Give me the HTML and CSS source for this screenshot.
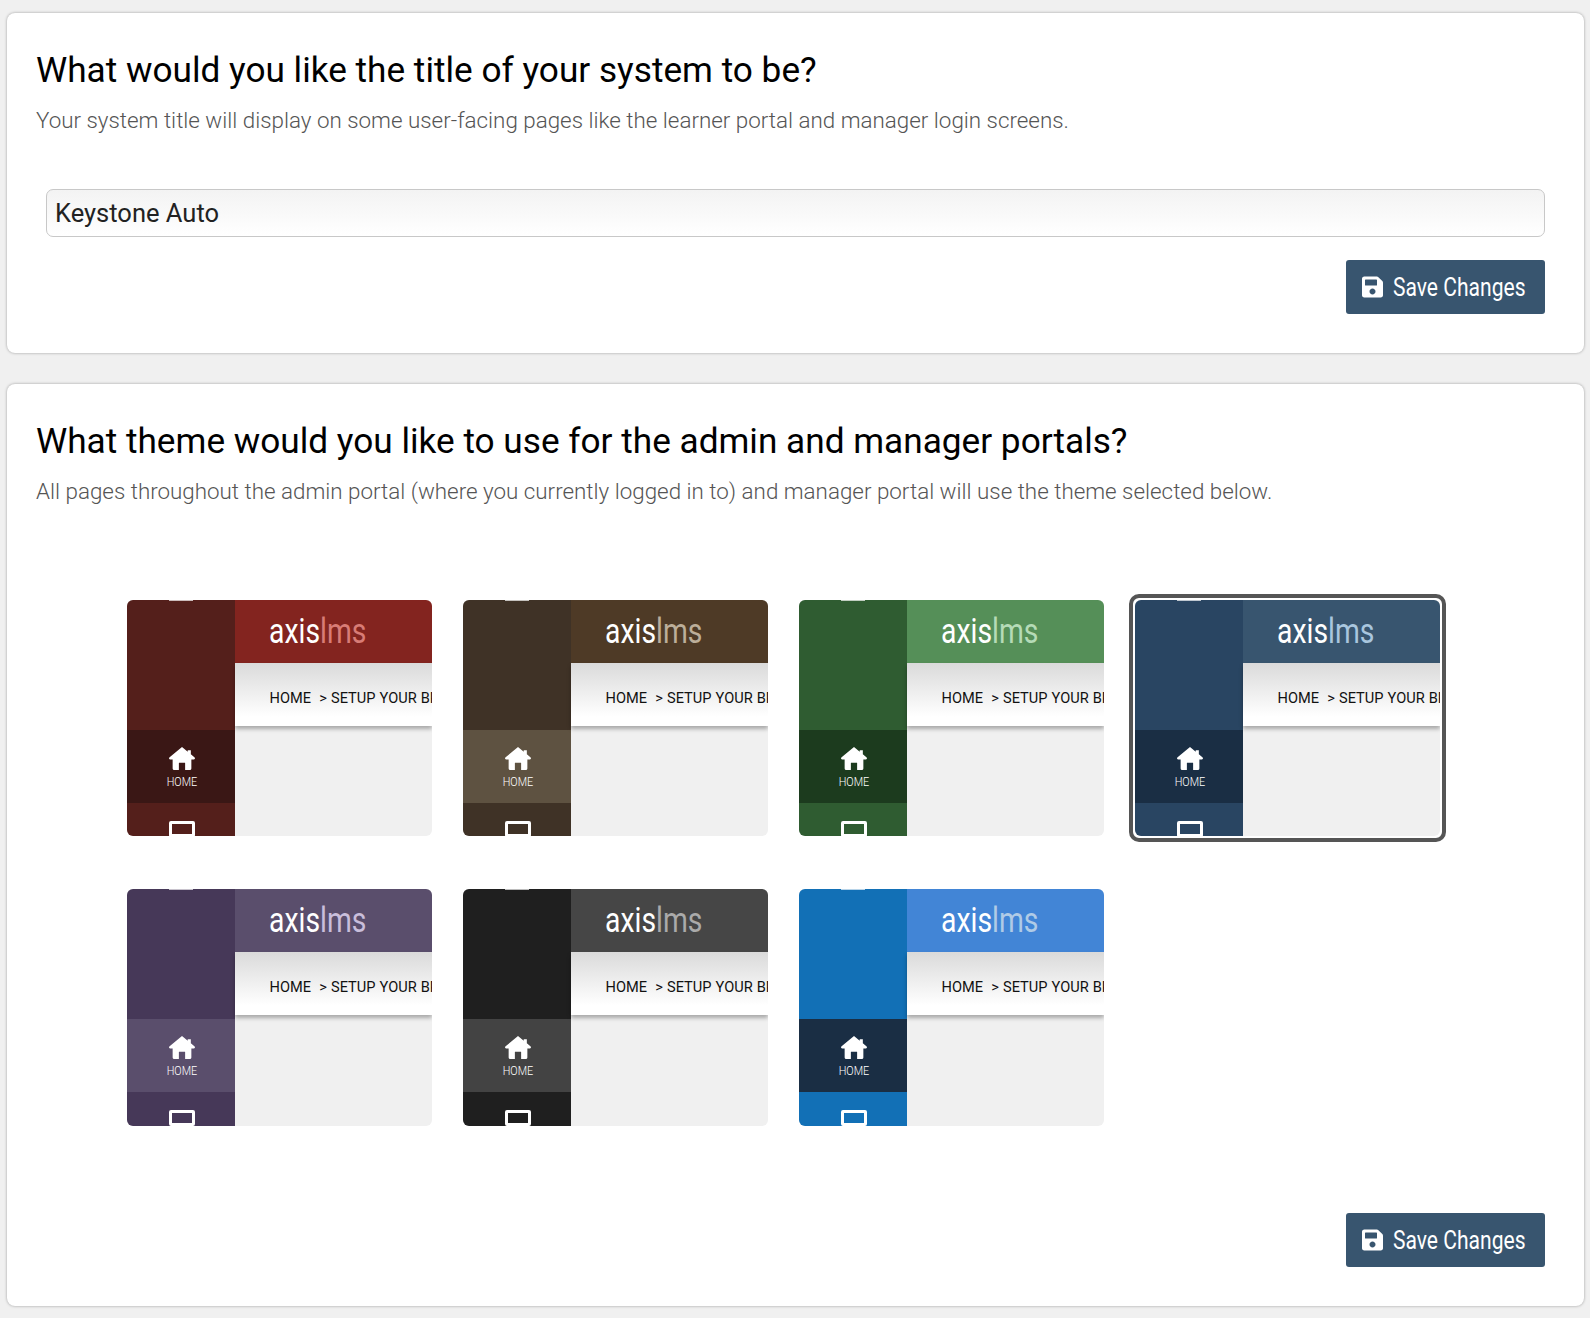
FILE: index.html
```html
<!DOCTYPE html>
<html lang="en">
<head>
<meta charset="utf-8">
<title>System settings</title>
<link rel="stylesheet" href="styles.css">
</head>
<body>
<svg class="defs" width="0" height="0" aria-hidden="true">
  <symbol id="save" viewBox="0 0 448 512"><path d="M433.941 129.941l-83.882-83.882A48 48 0 0 0 316.118 32H48C21.49 32 0 53.49 0 80v352c0 26.51 21.49 48 48 48h352c26.51 0 48-21.49 48-48V163.882a48 48 0 0 0-14.059-33.941zM224 416c-35.346 0-64-28.654-64-64 0-35.346 28.654-64 64-64s64 28.654 64 64c0 35.346-28.654 64-64 64zm96-304.52V212c0 6.627-5.373 12-12 12H76c-6.627 0-12-5.373-12-12V108c0-6.627 5.373-12 12-12h228.52c3.183 0 6.235 1.264 8.485 3.515l3.48 3.48A11.996 11.996 0 0 1 320 111.48z"/></symbol>
  <symbol id="home" viewBox="0 0 25 22"><path d="M12.5 0L.6 9.8a1.2 1.2 0 0 0 .8 2.2H3.5v8.5A1.5 1.5 0 0 0 5 22h4.5v-7h6v7H20a1.5 1.5 0 0 0 1.5-1.5V12h2.1a1.2 1.2 0 0 0 .8-2.2L21 7V3h-3v1.5z"/></symbol>
</svg>
<main class="page">
  <section class="card card-title">
    <h2>What would you like the title of your system to be?</h2>
    <p class="sub">Your system title will display on some user-facing pages like the learner portal and manager login screens.</p>
    <input class="title-input" type="text" value="Keystone Auto">
    <div class="actions"><button class="save" type="button"><svg class="save-icon"><use href="#save"/></svg><span class="save-label">Save Changes</span></button></div>
  </section>
  <section class="card card-theme">
    <h2>What theme would you like to use for the admin and manager portals?</h2>
    <p class="sub">All pages throughout the admin portal (where you currently logged in to) and manager portal will use the theme selected below.</p>
    <div class="themes">
      <div class="slot"><div class="thumb red"><div class="side"><div class="nav-home"><svg class="home-icon"><use href="#home"/></svg><span>HOME</span></div><div class="monitor"></div></div><div class="main"><div class="bar"><span class="logo">axis<span class="lms">lms</span></span></div><div class="crumb">HOME&nbsp; &gt; SETUP YOUR BRANDING</div></div></div></div>
      <div class="slot"><div class="thumb brown"><div class="side"><div class="nav-home"><svg class="home-icon"><use href="#home"/></svg><span>HOME</span></div><div class="monitor"></div></div><div class="main"><div class="bar"><span class="logo">axis<span class="lms">lms</span></span></div><div class="crumb">HOME&nbsp; &gt; SETUP YOUR BRANDING</div></div></div></div>
      <div class="slot"><div class="thumb green"><div class="side"><div class="nav-home"><svg class="home-icon"><use href="#home"/></svg><span>HOME</span></div><div class="monitor"></div></div><div class="main"><div class="bar"><span class="logo">axis<span class="lms">lms</span></span></div><div class="crumb">HOME&nbsp; &gt; SETUP YOUR BRANDING</div></div></div></div>
      <div class="slot selected"><div class="thumb navy"><div class="side"><div class="nav-home"><svg class="home-icon"><use href="#home"/></svg><span>HOME</span></div><div class="monitor"></div></div><div class="main"><div class="bar"><span class="logo">axis<span class="lms">lms</span></span></div><div class="crumb">HOME&nbsp; &gt; SETUP YOUR BRANDING</div></div></div></div>
      <div class="slot"><div class="thumb purple"><div class="side"><div class="nav-home"><svg class="home-icon"><use href="#home"/></svg><span>HOME</span></div><div class="monitor"></div></div><div class="main"><div class="bar"><span class="logo">axis<span class="lms">lms</span></span></div><div class="crumb">HOME&nbsp; &gt; SETUP YOUR BRANDING</div></div></div></div>
      <div class="slot"><div class="thumb black"><div class="side"><div class="nav-home"><svg class="home-icon"><use href="#home"/></svg><span>HOME</span></div><div class="monitor"></div></div><div class="main"><div class="bar"><span class="logo">axis<span class="lms">lms</span></span></div><div class="crumb">HOME&nbsp; &gt; SETUP YOUR BRANDING</div></div></div></div>
      <div class="slot"><div class="thumb blue"><div class="side"><div class="nav-home"><svg class="home-icon"><use href="#home"/></svg><span>HOME</span></div><div class="monitor"></div></div><div class="main"><div class="bar"><span class="logo">axis<span class="lms">lms</span></span></div><div class="crumb">HOME&nbsp; &gt; SETUP YOUR BRANDING</div></div></div></div>
    </div>
    <div class="actions"><button class="save" type="button"><svg class="save-icon"><use href="#save"/></svg><span class="save-label">Save Changes</span></button></div>
  </section>
</main>
</body>
</html>
```
FILE: styles.css
```css
* { box-sizing: border-box; }
html, body { margin: 0; padding: 0; }
body { background: #f0f0f0; font-family: Roboto, "Liberation Sans", sans-serif; color: #000; }
.defs { display: block; height: 0; }
.page { display: flex; flex-direction: column; gap: 31px; padding: 13px 6px 12px 7px; }
.card { background: #fff; border-radius: 8px; box-shadow: 0 0 3px rgba(0, 0, 0, 0.35); padding: 34px 39px 0 29px; }
.card-title { height: 340px; }
.card-theme { height: 922px; }
h2 { margin: 0; font-size: 35.2px; line-height: 46px; font-weight: 400; }
.sub { margin: 12px 0 0; font-size: 22.39px; line-height: 30px; font-weight: 300; color: #555; }
.title-input { display: block; width: 1499px; height: 48px; margin: 54px 0 0 10px; padding: 0 8px; border: 1px solid #c8c8c8; border-radius: 7px; background: linear-gradient(#f3f3f3, #fff); font: 400 25.5px Roboto, sans-serif; color: #222; }
.actions { display: flex; justify-content: flex-end; }
.card-title .actions { margin-top: 23px; }
.save { display: flex; align-items: center; gap: 10px; width: 199px; height: 54px; padding: 0 0 0 16px; border: 0; border-radius: 3px; background: #38556f; color: #fff; font-family: Roboto, sans-serif; font-size: 26px; overflow: hidden; }
.save-icon { flex: none; width: 21px; height: 24px; fill: #fff; }
.save-label { display: inline-block; transform: scaleX(0.81); transform-origin: left center; white-space: nowrap; }
.themes { display: grid; grid-template-columns: repeat(4, 305px); grid-template-rows: 236px 237px; column-gap: 31px; row-gap: 53px; margin: 94px 0 0 91px; }
.slot { position: relative; }
.selected::after { content: ""; position: absolute; inset: -6px; border: 4px solid #555; border-radius: 10px; }
.thumb { position: relative; display: grid; grid-template-columns: 107.5px 1fr; height: 100%; overflow: hidden; border-radius: 6px; background: #f0f0f0; }
.thumb::before { content: ""; position: absolute; left: 42px; top: 0; width: 24px; height: 1px; background: rgba(255, 255, 255, 0.7); }
.side { display: flex; flex-direction: column; align-items: center; background: var(--side); padding-top: 130px; }
.nav-home { display: flex; flex-direction: column; align-items: center; width: 100%; height: 73px; padding: 17px 0 0 2px; background: var(--active); color: #fff; font-size: 12px; line-height: 14px; }
.nav-home span { display: block; margin-top: 5px; transform: scaleX(0.9); font-weight: 300; }
.home-icon { flex: none; width: 26px; height: 23px; fill: #fff; }
.monitor { flex: none; width: 26px; height: 16px; margin: 18px 0 0 2px; border: 3px solid #fff; border-radius: 2px; }
.main { display: flex; flex-direction: column; min-width: 0; }
.bar { height: 63px; padding-left: 34px; background: var(--head); color: #fff; font-size: 35px; line-height: 63px; }
.logo { display: inline-block; transform: scaleX(0.81); transform-origin: left center; white-space: nowrap; }
.lms { color: var(--lms); font-weight: 400; }
.crumb { height: 63px; padding-left: 35px; background: linear-gradient(#dadada, #fff 85%); box-shadow: 0 3px 4px rgba(0, 0, 0, 0.3); font-size: 14.6px; line-height: 70px; word-spacing: 0.5px; white-space: nowrap; overflow: hidden; color: #111; }
.red { --side: #541f1b; --active: #3a1715; --head: #83241f; --lms: #d87c76; }
.brown { --side: #3f3226; --active: #5e5241; --head: #4e3a26; --lms: #bcae9a; }
.green { --side: #2f5c31; --active: #1c3b1e; --head: #558f58; --lms: #b5dbb7; }
.navy { --side: #294562; --active: #1a2e44; --head: #38556f; --lms: #a9c6de; }
.purple { --side: #463858; --active: #5a4e6c; --head: #5a4e6c; --lms: #c9bedb; }
.black { --side: #1f1f1f; --active: #434343; --head: #464646; --lms: #aaaaaa; }
.blue { --side: #1270b6; --active: #1a2e44; --head: #4285d6; --lms: #b0cbe6; }
.card-theme .actions { margin-top: 87px; }
```
